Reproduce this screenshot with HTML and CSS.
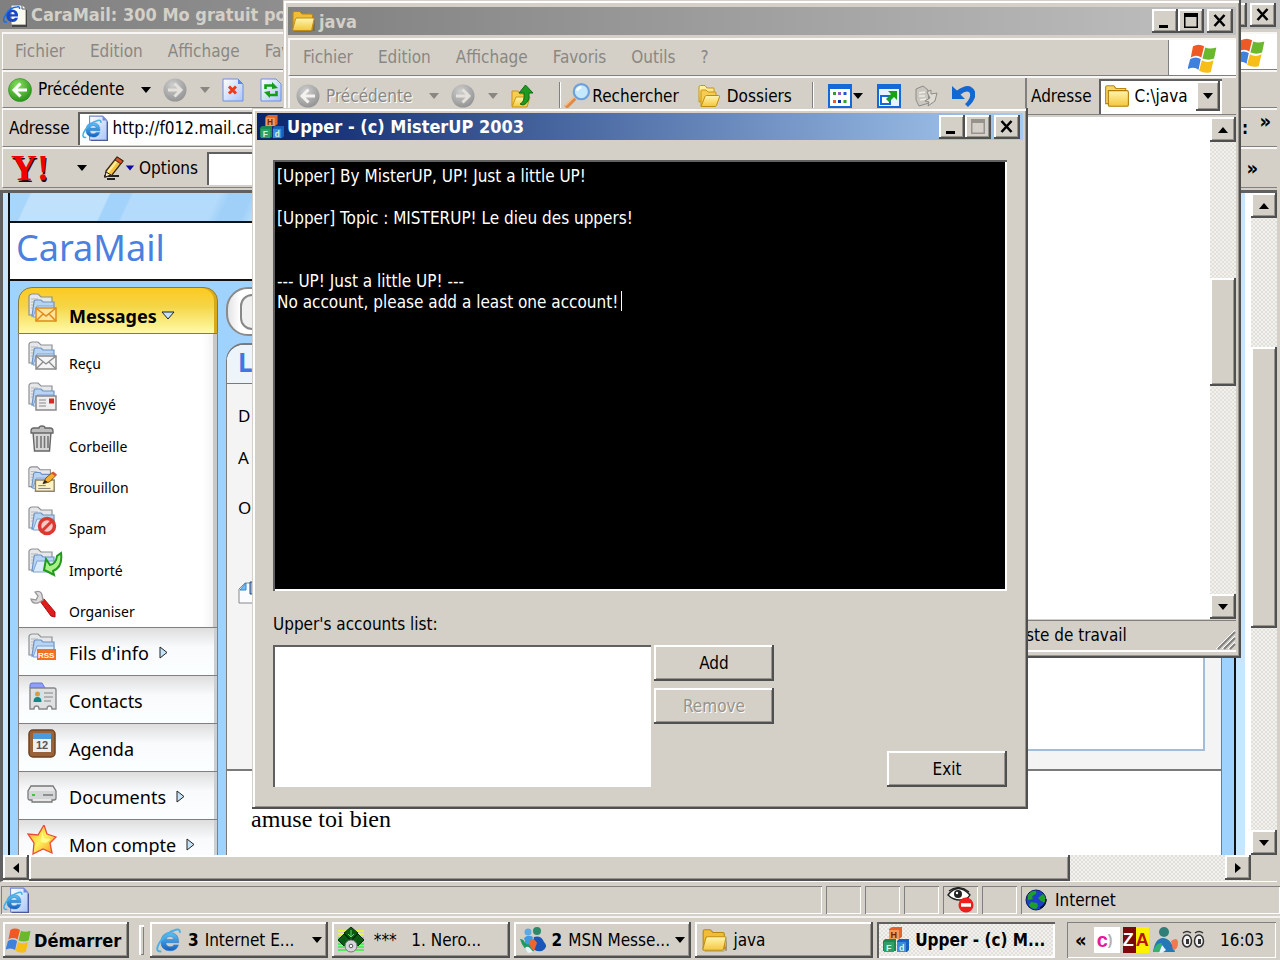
FILE: index.html
```html
<!DOCTYPE html>
<html lang="fr">
<head>
<meta charset="utf-8">
<title>Upper - (c) MisterUP 2003</title>
<link rel="stylesheet" href="styles.css">
</head>
<body>
<svg class="defs" aria-hidden="true">
  <defs>
    <linearGradient id="gFolder" x1="0" y1="0" x2="0" y2="1"><stop offset="0" stop-color="#fff6b0"/><stop offset="1" stop-color="#f5c63c"/></linearGradient>
    <linearGradient id="gDoc" x1="0" y1="0" x2="1" y2="1"><stop offset="0" stop-color="#fff"/><stop offset="1" stop-color="#a9c6f7"/></linearGradient>
    <radialGradient id="gGreen" cx=".4" cy=".3" r=".8"><stop offset="0" stop-color="#8ce05e"/><stop offset="1" stop-color="#1c8a12"/></radialGradient>
    <radialGradient id="gGray" cx=".4" cy=".3" r=".8"><stop offset="0" stop-color="#cfcfcf"/><stop offset="1" stop-color="#8c8c8c"/></radialGradient>
    <linearGradient id="gBlue" x1="0" y1="0" x2="0" y2="1"><stop offset="0" stop-color="#5ec4f5"/><stop offset="1" stop-color="#1460c0"/></linearGradient>
    <linearGradient id="gStar" x1="0" y1="0" x2="1" y2="1"><stop offset="0" stop-color="#f9a01b"/><stop offset=".5" stop-color="#fff25a"/><stop offset="1" stop-color="#f58a1e"/></linearGradient>
  </defs>
  <symbol id="e" viewBox="0 0 24 24">
    <path fill-rule="evenodd" d="M21 14.500H9q.6 3.700 4.200 3.700 2.300 0 3.300-1.700h4.200Q18.800 22 13 22q-8.500-.4-8.500-8.500Q5 5.500 13 5q8.200.5 8 9.500zM9.200 11.500h7.400Q16 8.600 13 8.600t-3.800 2.900z" fill="url(#gBlue)" stroke="#2a78c8" stroke-width=".5"/>
    <path d="M5 22.500Q-2 23 3.500 14T18.500 2.500q4-1 3.500 3" fill="none" stroke="#4ab0e6" stroke-width="1.800"/>
  </symbol>
  <symbol id="iedoc" viewBox="0 0 24 24">
    <path d="M7 1h12l4 4v18H7z" fill="url(#gDoc)" stroke="#7189d2" stroke-width="1"/><path d="M8 23.500h15.500V6" fill="none" stroke="#4a5a9a"/>
    <path d="M19 1v4h4z" fill="#6f8be0"/>
    <use href="#e" x="0" y="3" width="19" height="19"/>
  </symbol>
  <symbol id="iedark" viewBox="0 0 24 24">
    <path d="M8 2h11l4 4v16H8z" fill="#fbfaf0" stroke="#777"/><path d="M9 23h15V7" fill="none" stroke="#333" stroke-width="1.500"/><path d="M19 2v4h4" fill="#fff" stroke="#555"/>
    <path fill-rule="evenodd" d="M15 13.500H6.500q.6 2.500 3.200 2.500 1.600 0 2.300-1.200h3Q13.800 19 9.500 19 3.500 18.500 3.300 12.800 3.700 7 9.500 6.500q5.800.5 5.500 7zM6.600 11.200h5.200Q11.500 9 9.300 9T6.600 11.200z" fill="#1848c8"/><path d="M4 19Q-2 20 2.500 12T14 4q3-1 2.500 2" fill="none" stroke="#1b6fe0" stroke-width="1.500"/>
  </symbol>
  <symbol id="folder" viewBox="0 0 24 22">
    <path d="M3 21.500h18.500L24 9v12H4z" fill="#6a5a30" opacity=".5"/>
    <path d="M2 19V3q0-1.500 1.500-1.500h5L11 4h9q1.500 0 1.500 1.500V19z" fill="#f0bd35" stroke="#b9860d"/>
    <path d="M3 20.500q-1.500 0-1.200-1.500L4.500 9q.3-1 1.500-1h16q1.300 0 1 1.300L20.800 19.500q-.3 1-1.500 1z" fill="url(#gFolder)" stroke="#c08d12"/>
  </symbol>
  <symbol id="closedfolder" viewBox="0 0 24 22">
    <path d="M1.500 18V3q0-1.500 1.500-1.500h6L11 4h9v14z" fill="#f6d566" stroke="#b9860d"/>
    <path d="M4 6h17q1.500 0 1.500 1.500V19q0 1.500-1.500 1.500H5.500Q4 20.500 4 19z" fill="url(#gFolder)" stroke="#b07c08"/>
  </symbol>
  <symbol id="folders" viewBox="0 0 24 24">
    <path d="M2 18V3q0-1.500 1.500-1.500H8L10 4h7v12z" fill="url(#gFolder)" stroke="#c99614"/>
    <path d="M4 22V7q0-1 1-1h4l2 2h7q1 0 1 1v4" fill="#f4cd52" stroke="#c99614"/>
    <path d="M4 22.500l4-10q.4-1 1.500-1h12q1.500 0 1 1.300l-3 8.700q-.4 1-1.500 1z" fill="url(#gFolder)" stroke="#c08d12"/>
  </symbol>
  <symbol id="back" viewBox="0 0 24 24"><circle cx="12" cy="12" r="11.500" fill="url(#gGreen)" stroke="#2d8a22" stroke-width=".6"/><path d="M12.500 5.500L6 12l6.500 6.500M6.500 12H19" fill="none" stroke="#fff" stroke-width="3"/></symbol>
  <symbol id="backoff" viewBox="0 0 24 24"><circle cx="12" cy="12" r="11.500" fill="url(#gGray)"/><path d="M12.500 5.500L6 12l6.500 6.500M6.500 12H19" fill="none" stroke="#f4f2ee" stroke-width="3"/></symbol>
  <symbol id="fwdoff" viewBox="0 0 24 24"><circle cx="12" cy="12" r="11.500" fill="url(#gGray)"/><path d="M11.500 5.500L18 12l-6.500 6.500M17.500 12H5" fill="none" stroke="#e4e1dc" stroke-width="3"/></symbol>
  <symbol id="stop" viewBox="0 0 22 24"><path d="M1 1h15l5 5v17H1z" fill="url(#gDoc)" stroke="#6f8fdc"/><path d="M16 1v5h5z" fill="#5f86e0"/><path d="M7 8.500l7 7m0-7l-7 7" stroke="#f03c14" stroke-width="3"/></symbol>
  <symbol id="refresh" viewBox="0 0 22 24"><path d="M1 1h15l5 5v17H1z" fill="url(#gDoc)" stroke="#6f8fdc"/><path d="M5.500 11V7.500h8" fill="none" stroke="#12a012" stroke-width="2.600"/><path d="M12 4l6 6-6 1zM10 13l-6 1 6 6z" fill="#12a012"/><path d="M16.500 13v4h-8" fill="none" stroke="#12a012" stroke-width="2.600"/></symbol>
  <symbol id="pencil" viewBox="0 0 24 24"><path d="M2 20h15m-12 3h8" stroke="#222" stroke-width="2"/><path d="M4 15L15 1l6 4-11 14-7 2z" fill="#f9c23c" stroke="#3a2b10" stroke-width="1.300"/><path d="M6 16L16.500 3" stroke="#fff0a0" stroke-width="2"/><path d="M15 1l6 4-2 3-6-4z" fill="#e14a2a" stroke="#3a2b10"/><path d="M3 21l1-5 5 3z" fill="#fbe8c4" stroke="#222"/></symbol>
  <symbol id="up" viewBox="0 0 22 24"><path d="M1 22V7h6l2 3h7v12z" fill="#f4cd52" stroke="#c99614"/><path d="M1 23l4-10h14l-3 10z" fill="url(#gFolder)" stroke="#c99614"/><path d="M9 20q5-2 4-11H8l6.500-8L22 9h-4q1 10-6 12z" fill="#1f9a20" stroke="#0f6f12"/></symbol>
  <symbol id="search" viewBox="0 0 24 24"><path d="M1.500 22.500L10 14" stroke="#e08a4a" stroke-width="4"/><path d="M1 21l8-8" stroke="#f7c490" stroke-width="1.500"/><circle cx="16" cy="8" r="7" fill="#c5e8fd" stroke="#6f9fdc" stroke-width="2"/><path d="M12 7q1-3 4-3" fill="none" stroke="#fff" stroke-width="2"/></symbol>
  <symbol id="views" viewBox="0 0 24 24"><path d="M1 1h22v22H1z" fill="#fff" stroke="#1568d8" stroke-width="2"/><path d="M0 0h24v5H0z" fill="#1568d8"/><path d="M5 8h3v3H5zM15.500 16h3v3h-3z" fill="#2d9e2a"/><path d="M10 8h3v3h-3z" fill="#8a5ad0"/><path d="M15.500 8h3v3h-3z" fill="#1a58d0"/><path d="M5 16h3v3H5z" fill="#f05a1a"/><path d="M10 16h3v3h-3z" fill="#142fa0"/></symbol>
  <symbol id="goto" viewBox="0 0 24 24"><path d="M1 1h22v22H1z" fill="#e9f3ff" stroke="#1568d8" stroke-width="2"/><path d="M0 0h24v5H0z" fill="#1568d8"/><path d="M4 12h9v8H4z" fill="#fff" stroke="#1568d8" stroke-width="2"/><path d="M11 7h9v9l-3-3-5 5-3-3 5-5z" fill="#18a018"/></symbol>
  <symbol id="copyoff" viewBox="0 0 24 24"><path d="M2 5l7-3 5 4 1 13-10 3-3-6z" fill="#cac7c1" stroke="#8e8b86"/><path d="M5 9l6-1m-6 4h6m-5 4l6-1" stroke="#efece6" stroke-width="1.500"/><path d="M13 8l4-2v4l6-1-2 8-7 5 1-4-4-1 5-3z" fill="#dedbd5" stroke="#8e8b86"/></symbol>
  <symbol id="undo" viewBox="0 0 24 24"><path d="M1 2v13h13l-4.500-4.500q6-5 9-2 2.500 5-4.500 11.500l3 3q9-8 7-15.500Q19-3 6 6.500z" fill="#1268d2"/></symbol>
  <symbol id="flag" viewBox="3 1 26 27">
    <path d="M7 4q5-3 10 0l-2.500 10q-4.500-3-9.500 0z" fill="#ee5a24"/><path d="M18 5q4 2 10 0l-2 10q-5 2-10.500 0z" fill="#6ab82c"/><path d="M4.500 15.500q5-3 9.500 0L12 25q-4-3-10-.5z" fill="#3f80dc"/><path d="M15 16.500q5 3 10.500 0L23 27q-5 2-10.500-1z" fill="#f7bd18"/>
  </symbol>
  <symbol id="blocks" viewBox="0 0 26 26">
    <path d="M6 2l3-2h10v10l-3 2H6z" fill="#e4632c"/><path d="M6 3h10v9H6z" fill="#f49a58"/>
    <path d="M0 14l2-2h11v12H0z" fill="#1c8a50"/><path d="M1 15h10v10H1z" fill="#2fa068"/>
    <path d="M14 14l2-2h10v11l-2 2H14z" fill="#1660c0"/><path d="M14 15h9v10h-9z" fill="#3a8ce0"/>
    <text x="7.500" y="11" class="block-letter">H</text><text x="3" y="24" class="block-letter light">F</text><text x="16" y="24" class="block-letter light">d</text>
  </symbol>
  <symbol id="mailfolder" viewBox="0 0 30 30">
    <path d="M2 22V3q1-2 3-2h6l3 3h11v18z" fill="#e6e7e8" stroke="#8e9093" stroke-width="1.200"/><path d="M4 9h6M4 12h5M4 15h4M4 6h7" stroke="#b4b6b8"/>
    <path d="M5 23l2-14q0-2 2-2h5l2 2h11v13z" fill="#b7d4f3" stroke="#6d93c4" stroke-width="1.200"/><path d="M6 24l4-11h17l-1 11z" fill="#dcebfb" stroke="#7fa2cf"/>
  </symbol>
  <symbol id="m-messages" viewBox="0 0 30 30"><use href="#mailfolder" width="30" height="30"/><path d="M9 15h20v13H9z" fill="#ffe49a" stroke="#e08a1a" stroke-width="1.500"/><path d="M9 15l10 8 10-8M9 28l7-7m13 7l-7-7" fill="none" stroke="#e08a1a" stroke-width="1.500"/></symbol>
  <symbol id="m-recu" viewBox="0 0 30 30"><use href="#mailfolder" width="30" height="30"/><path d="M9 15h20v13H9z" fill="#f5f5f5" stroke="#8a8a8a" stroke-width="1.500"/><path d="M9 15l10 8 10-8M9 28l7-7m13 7l-7-7" fill="none" stroke="#8a8a8a" stroke-width="1.300"/></symbol>
  <symbol id="m-envoye" viewBox="0 0 30 30"><use href="#mailfolder" width="30" height="30"/><path d="M9 14h20v14H9z" fill="#efefef" stroke="#8a8a8a" stroke-width="1.500"/><path d="M12 18h7m-7 3h7m-7 3h7" stroke="#aaa" stroke-width="1.300"/><path d="M22 16.500h5v5h-5z" fill="#d42a2a"/></symbol>
  <symbol id="m-corbeille" viewBox="0 0 30 30"><path d="M6 8h18l-1.500 19h-15z" fill="#d6d6d6" stroke="#666" stroke-width="1.400"/><path d="M4 7q0-3 3-3h5q0-2 3-2t3 2h5q3 0 3 3v2H4z" fill="#bcbcbc" stroke="#666" stroke-width="1.300"/><path d="M10 12v12m4-12v12m3.500-12v12m3.500-12v12" stroke="#777" stroke-width="1.600"/></symbol>
  <symbol id="m-brouillon" viewBox="0 0 32 30"><use href="#mailfolder" width="30" height="30"/><path d="M9 15h20v12H9z" fill="#fdf3c4" stroke="#8f8463" stroke-width="1.500"/><path d="M12 21h8m-8 3h13" stroke="#777"/><path d="M17 19l3-6 7-6 4 3-7 7z" fill="#f7ae2c" stroke="#7a4a10"/><path d="M26 8l2-2 4 3-2 2z" fill="#e0533a"/><path d="M17 19l2-4 3 2z" fill="#222"/></symbol>
  <symbol id="m-spam" viewBox="0 0 30 30"><use href="#mailfolder" width="30" height="30"/><circle cx="20" cy="20" r="7.500" fill="#f5c9c4" stroke="#dc3a30" stroke-width="3.500"/><path d="M15 25l10-10" stroke="#dc3a30" stroke-width="3"/></symbol>
  <symbol id="m-importe" viewBox="0 0 36 30"><use href="#mailfolder" width="30" height="30"/><path d="M19 11l4 6q6-1 7-9l4-3q2 14-8 18l1 4q-7-4-10-5z" fill="#a9f08a" stroke="#1f9a1a" stroke-width="2"/></symbol>
  <symbol id="m-organiser" viewBox="0 0 30 30"><path d="M13 12l4-2 11 13v5l-4-1z" fill="#e01c1c" stroke="#a80e0e"/><path d="M8 3q6-2 7 3l1 5-5 3Q5 15 4 10l5 1 2-4z" fill="#ddd" stroke="#999" stroke-width="1.300"/></symbol>
  <symbol id="m-rss" viewBox="0 0 30 30"><use href="#mailfolder" width="30" height="30"/><path d="M10 16h19v11H10z" fill="#f2701e"/><text x="11" y="25" class="rss-letter">RSS</text></symbol>
  <symbol id="m-contacts" viewBox="0 0 30 30"><path d="M3 4q0-2 2-2h10l3 5H3z" fill="#8ea0f8" stroke="#6576d8"/><path d="M3 7h24q2 0 2 2v19h-4q0-3-2.500-3T20 28h-8q0-3-2.500-3T7 28H3z" fill="#dfe0e2" stroke="#888" stroke-width="1.400"/><path d="M6 10h9v11H6z" fill="#c5e6ef"/><circle cx="10.500" cy="13" r="2.500" fill="#d99a4a"/><path d="M6.500 21q0-5 4-5t4 5z" fill="#17848a"/><path d="M17 12h9m-9 4h9m-9 4h7" stroke="#a2a2a2" stroke-width="1.500"/></symbol>
  <symbol id="m-agenda" viewBox="0 0 30 30"><rect x="2" y="1" width="26" height="27" rx="4" fill="#9a6238" stroke="#6e4220" stroke-width="1.500"/><path d="M6 5h18v18H6z" fill="#eef0f2"/><path d="M6 4h18v6H6z" fill="#4b9ade"/><text x="9" y="20" class="day">12</text></symbol>
  <symbol id="m-drive" viewBox="0 0 30 30"><path d="M4 9h22l3 5v7q0 2-2 2h-2v2H5v-2H3q-2 0-2-2v-7z" fill="#e8e8e8" stroke="#777" stroke-width="1.300"/><path d="M2 14h26v8H2z" fill="#d4d5d6"/><path d="M16 18h10" stroke="#777" stroke-width="1.500"/><path d="M5 17h3v2H5z" fill="#41c441"/></symbol>
  <symbol id="m-star" viewBox="0 0 30 30"><path d="M17 0l3 9 9 3-6 6 2 10-9-4-10 5 1-11-6-9 10 1z" fill="url(#gStar)" stroke="#ee4a3a" stroke-width="1.300"/><path d="M15 6l2 7 7 1-5 4-5-1z" fill="#fffb8a"/></symbol>
  <symbol id="nero" viewBox="0 0 26 26"><path d="M0 4h26M0 7h26" stroke="#eaff20" stroke-width="1.600"/><path d="M0 11h26M0 14h26M0 17h26M0 20h26M0 23h26" stroke="#30f040" stroke-width="1.600"/><path d="M13 0l7 6-7 7-7-7zM6 7l6 6-6 6-6-6zM20 7l6 6-6 6-6-6z" fill="#0b5a14" stroke="#052f08"/><path d="M13 3v7m-3-3l3 3 3-3" stroke="#5fe05f" fill="none"/><circle cx="13" cy="19" r="6" fill="#d8d4dc" stroke="#777"/><circle cx="13" cy="19" r="1.800" fill="#fff" stroke="#555"/></symbol>
  <symbol id="msn" viewBox="0 0 26 26"><circle cx="8" cy="5" r="3.500" fill="#5fa8e0"/><circle cx="17" cy="4" r="4" fill="#2b8a68"/><path d="M0 12q4 0 5 4 2-6 7-5l2 13q-10 2-14-12z" fill="#1e9a60"/><path d="M4 11q4-4 9-1l-2 8-5-1z" fill="#3f9ae0"/><path d="M14 10q7-2 10 5 5 5-2 9-8 1-10-4z" fill="#1c55b8"/><path d="M9 15q4-6 8 1l-3 8q-4-3-5-9z" fill="#f0662a"/><path d="M5 21q3-4 8 4l-5 1z" fill="#e8f2fa"/></symbol>
  <symbol id="globe" viewBox="0 0 22 22"><circle cx="11" cy="11" r="10" fill="#1b3fc8" stroke="#0a1d5a"/><path d="M3 6q4-5 8-4 1 3-2 4t-1 4l-5 1zM13 9l5-4q4 4 2 9l-4-2zM6 13l6 1q2 3-1 6-5 0-7-4z" fill="#1ea028"/><path d="M15 19q6-3 6-9" stroke="#061030" fill="none" stroke-width="1.500"/></symbol>
  <symbol id="eye" viewBox="0 0 28 26"><path d="M1 8q10-13 22 0-3 5-10 5T1 8z" fill="#fff" stroke="#222" stroke-width="1.400"/><path d="M2 4q10-7 20 1" fill="none" stroke="#222" stroke-width="1.500"/><circle cx="11" cy="7" r="4" fill="#222"/><circle cx="10" cy="6" r="1.200" fill="#fff"/><circle cx="19" cy="18" r="7.500" fill="#ee1c1c"/><path d="M14 18h10" stroke="#fff" stroke-width="3.500"/></symbol>
  <symbol id="buddy" viewBox="0 0 26 26"><circle cx="12" cy="5" r="5" fill="#2f7f78"/><path d="M1 25q2-14 10-14t12 14z" fill="#2478b8"/><path d="M1 25q2-9 9-9l-2 9z" fill="#38b070"/><path d="M10 18l4 5-4 3H7z" fill="#e4f2fa"/><path d="M19 14q7-5 7 2t-5 7z" fill="#f07a50"/></symbol>
  <symbol id="eyes" viewBox="0 0 24 20"><path d="M2 3q4-3 8 0m4 0q4-3 8 0" fill="none" stroke="#333" stroke-width="1.500"/><ellipse cx="6" cy="11" rx="4.500" ry="6" fill="#f2f2f2" stroke="#333" stroke-width="1.500"/><ellipse cx="18" cy="11" rx="4.500" ry="6" fill="#f2f2f2" stroke="#333" stroke-width="1.500"/><path d="M5 9h3v5H5zM17 9h3v5h-3z" fill="#333"/></symbol>
  <symbol id="minimize" viewBox="0 0 24 24"><path d="M6 16h9v3H6z"/></symbol>
  <symbol id="maximize" viewBox="0 0 24 24"><path d="M5 4h14v15H5zM6.500 8v9.500h11V8z" fill-rule="evenodd"/></symbol>
  <symbol id="close" viewBox="0 0 24 24"><path d="M6.500 6l10 11m0-11l-10 11" fill="none" stroke="currentColor" stroke-width="2.600"/></symbol>
  <symbol id="tri-d" viewBox="0 0 12 8"><path d="M1 1h10L6 7z"/></symbol>
  <symbol id="tri-u" viewBox="0 0 12 8"><path d="M1 7h10L6 1z"/></symbol>
  <symbol id="tri-l" viewBox="0 0 8 12"><path d="M7 1v10L1 6z"/></symbol>
  <symbol id="tri-r" viewBox="0 0 8 12"><path d="M1 1v10l6-5z"/></symbol>
  <symbol id="more-r" viewBox="0 0 9 13"><path d="M1 1v11l7-5.500z" fill="#c4e2f8" stroke="#222"/></symbol>
  <symbol id="more-d" viewBox="0 0 14 9"><path d="M1 1h12L7 8z" fill="#c4e2f8" stroke="#222"/></symbol>
</svg>

<div class="desktop">
  <main class="browser">
    <header class="titlebar inactive">
      <svg class="i24"><use href="#iedark"/></svg>
      <span class="title">CaraMail: 300 Mo gratuit pour vos e-mails</span>
      <span class="winbtns">
        <button aria-label="Réduire"><svg class="i24"><use href="#minimize"/></svg></button><button aria-label="Restaurer"><svg class="i24"><use href="#maximize"/></svg></button><button class="close" aria-label="Fermer"><svg class="i24"><use href="#close"/></svg></button>
      </span>
    </header>
    <nav class="bar menubar">
      <button>Fichier</button><button>Edition</button><button>Affichage</button><button>Favoris</button>
      <span class="brand"><svg class="i30"><use href="#flag"/></svg></span>
    </nav>
    <div class="bar toolbar">
      <button class="tool"><svg class="i24"><use href="#back"/></svg>Précédente</button>
      <button class="drop" aria-label="Historique"><svg class="tri"><use href="#tri-d"/></svg></button>
      <button class="tool off" aria-label="Suivante"><svg class="i24"><use href="#fwdoff"/></svg></button>
      <button class="drop off" aria-label="Historique suivant"><svg class="tri"><use href="#tri-d"/></svg></button>
      <button class="tool stop" aria-label="Arrêter"><svg class="i24"><use href="#stop"/></svg></button>
      <button class="tool reload" aria-label="Actualiser"><svg class="i24"><use href="#refresh"/></svg></button>
    </div>
    <div class="bar addressbar">
      <label for="url">Adresse</label>
      <span class="field"><svg class="i26"><use href="#iedoc"/></svg><input id="url" value="http://f012.mail.caramail.com/"></span>
      <button class="chevron">: <span>»</span></button>
    </div>
    <div class="bar yahoobar">
      <span class="yahoo">Y!</span>
      <button class="drop" aria-label="Menu Yahoo"><svg class="tri"><use href="#tri-d"/></svg></button>
      <button class="tool options"><svg class="i24"><use href="#pencil"/></svg><svg class="tri navy"><use href="#tri-d"/></svg>Options</button>
      <span class="field"><input aria-label="Recherche"></span>
      <button class="chevron low">»</button>
    </div>

    <div class="viewport">
      <div class="page">
        <div class="sheet">
          <div class="banner"></div>
          <div class="logo">CaraMail</div>
          <div class="columns">
            <nav class="side">
              <a class="head" href="#"><svg class="i30"><use href="#m-messages"/></svg><span>Messages</span><svg class="more-d"><use href="#more-d"/></svg></a>
              <div class="items">
                <a href="#"><svg class="i30"><use href="#m-recu"/></svg><span>Reçu</span></a>
                <a href="#"><svg class="i30"><use href="#m-envoye"/></svg><span>Envoyé</span></a>
                <a href="#"><svg class="i30"><use href="#m-corbeille"/></svg><span>Corbeille</span></a>
                <a href="#"><svg class="i30"><use href="#m-brouillon"/></svg><span>Brouillon</span></a>
                <a href="#"><svg class="i30"><use href="#m-spam"/></svg><span>Spam</span></a>
                <a href="#"><svg class="i36"><use href="#m-importe"/></svg><span>Importé</span></a>
                <a href="#"><svg class="i30"><use href="#m-organiser"/></svg><span>Organiser</span></a>
              </div>
              <a class="section" href="#"><svg class="i30"><use href="#m-rss"/></svg><span>Fils d'info</span><svg class="more-r"><use href="#more-r"/></svg></a>
              <a class="section" href="#"><svg class="i30"><use href="#m-contacts"/></svg><span>Contacts</span></a>
              <a class="section" href="#"><svg class="i30"><use href="#m-agenda"/></svg><span>Agenda</span></a>
              <a class="section" href="#"><svg class="i30"><use href="#m-drive"/></svg><span>Documents</span><svg class="more-r"><use href="#more-r"/></svg></a>
              <a class="section" href="#"><svg class="i30"><use href="#m-star"/></svg><span>Mon compte</span><svg class="more-r"><use href="#more-r"/></svg></a>
            </nav>
            <section class="mail">
              <div class="pill"><span></span></div>
              <div class="letter">
                <h2>L</h2>
                <div class="fields">
                  <p>D</p><p>A</p><p class="subject">O</p>
                  <svg class="attach" viewBox="0 0 24 24"><path d="M1 8l6-6h16v20H1z" fill="#fafcff" stroke="#888"/><path d="M2 9l6-7v7z" fill="#6fc0f8" stroke="#3a86c8"/><path d="M12 1h11v12H12z" fill="#8ab4e0" stroke="#2a4a80"/></svg>
                  <div class="notes"></div>
                </div>
                <p class="body">amuse toi bien</p>
              </div>
            </section>
          </div>
        </div>
      </div>
      <div class="scroll v">
        <button aria-label="Haut"><svg class="tri"><use href="#tri-u"/></svg></button>
        <div class="track"><div class="thumb page-v"></div></div>
        <button aria-label="Bas"><svg class="tri"><use href="#tri-d"/></svg></button>
      </div>
      <div class="scroll h">
        <button aria-label="Gauche"><svg class="trih"><use href="#tri-l"/></svg></button>
        <div class="track"><div class="thumb page-h"></div></div>
        <button aria-label="Droite"><svg class="trih"><use href="#tri-r"/></svg></button>
      </div>
    </div>

    <footer class="status">
      <span class="cell main"><svg class="i26"><use href="#iedoc"/></svg></span>
      <span class="cell"></span><span class="cell"></span><span class="cell"></span>
      <span class="cell"><svg class="i28"><use href="#eye"/></svg></span>
      <span class="cell"></span>
      <span class="cell zone"><svg class="i22"><use href="#globe"/></svg>Internet</span>
    </footer>
  </main>

  <section class="window explorer">
    <header class="titlebar inactive">
      <svg class="i24"><use href="#folder"/></svg><span class="title">java</span>
      <span class="winbtns">
        <button aria-label="Réduire"><svg class="i24"><use href="#minimize"/></svg></button><button aria-label="Agrandir"><svg class="i24"><use href="#maximize"/></svg></button><button class="close" aria-label="Fermer"><svg class="i24"><use href="#close"/></svg></button>
      </span>
    </header>
    <nav class="bar menubar">
      <button>Fichier</button><button>Edition</button><button>Affichage</button><button>Favoris</button><button>Outils</button><button>?</button>
      <span class="brand"><svg class="i30"><use href="#flag"/></svg></span>
    </nav>
    <div class="bar toolbar">
      <button class="tool off"><svg class="i24"><use href="#backoff"/></svg>Précédente</button>
      <button class="drop off" aria-label="Historique"><svg class="tri"><use href="#tri-d"/></svg></button>
      <button class="tool off" aria-label="Suivante"><svg class="i24"><use href="#fwdoff"/></svg></button>
      <button class="drop off" aria-label="Historique suivant"><svg class="tri"><use href="#tri-d"/></svg></button>
      <button class="tool parent" aria-label="Dossier parent"><svg class="i24"><use href="#up"/></svg></button>
      <span class="sep"></span>
      <button class="tool find"><svg class="i26"><use href="#search"/></svg>Rechercher</button>
      <button class="tool dirs"><svg class="i24"><use href="#folders"/></svg>Dossiers</button>
      <span class="sep"></span>
      <button class="tool views" aria-label="Affichages"><svg class="i24"><use href="#views"/></svg><svg class="tri"><use href="#tri-d"/></svg></button>
      <button class="tool" aria-label="Déplacer vers"><svg class="i24"><use href="#goto"/></svg></button>
      <button class="tool" aria-label="Copier vers"><svg class="i24"><use href="#copyoff"/></svg></button>
      <button class="tool" aria-label="Annuler"><svg class="i24"><use href="#undo"/></svg></button>
      <span class="address">
        <label for="path">Adresse</label>
        <span class="field"><svg class="i26"><use href="#closedfolder"/></svg><input id="path" value="C:\java"><button aria-label="Ouvrir la liste"><svg class="tri"><use href="#tri-d"/></svg></button></span>
      </span>
    </div>
    <div class="files">
      <div class="scroll v">
        <button aria-label="Haut"><svg class="tri"><use href="#tri-u"/></svg></button>
        <div class="track"><div class="thumb files-v"></div></div>
        <button aria-label="Bas"><svg class="tri"><use href="#tri-d"/></svg></button>
      </div>
    </div>
    <footer class="fileinfo"><span>Poste de travail</span><svg class="grip" viewBox="0 0 20 20"><path d="M2 19L19 2M8 19L19 8M14 19l5-5" stroke="#808080" stroke-width="2"/><path d="M0 19L19 0M6 19L19 6M12 19l7-7" stroke="#fff"/></svg></footer>
  </section>

  <section class="window upper">
    <header class="titlebar active">
      <svg class="i24"><use href="#blocks"/></svg><span class="title">Upper - (c) MisterUP 2003</span>
      <span class="winbtns">
        <button aria-label="Minimize"><svg class="i24"><use href="#minimize"/></svg></button><button aria-label="Maximize" disabled><svg class="i24"><use href="#maximize"/></svg></button><button class="close" aria-label="Close"><svg class="i24"><use href="#close"/></svg></button>
      </span>
    </header>
    <form class="dialog">
      <div class="console">
        <textarea aria-label="Console" readonly spellcheck="false">[Upper] By MisterUP, UP! Just a little UP!

[Upper] Topic : MISTERUP! Le dieu des uppers!


--- UP! Just a little UP! ---
No account, please add a least one account!</textarea>
        <i class="caret"></i>
      </div>
      <label for="accounts">Upper's accounts list:</label>
      <div class="accounts">
        <select id="accounts" size="6"></select>
        <div class="actions">
          <button type="button">Add</button>
          <button type="button" disabled>Remove</button>
        </div>
        <button type="button" class="exit">Exit</button>
      </div>
    </form>
  </section>

  <nav class="taskbar">
    <button class="start"><svg class="i26"><use href="#flag"/></svg>Démarrer</button>
    <span class="handle"></span>
    <div class="tasks">
      <button><svg class="i26"><use href="#e"/></svg><b>3</b><span>Internet E...</span><svg class="tri"><use href="#tri-d"/></svg></button>
      <button><svg class="i26"><use href="#nero"/></svg><span class="nero">***&nbsp;&nbsp; 1. Nero...</span></button>
      <button><svg class="i26"><use href="#msn"/></svg><b>2</b><span>MSN Messe...</span><svg class="tri"><use href="#tri-d"/></svg></button>
      <button><svg class="i26"><use href="#folder"/></svg><span class="wide">java</span></button>
      <button class="pressed"><svg class="i26"><use href="#blocks"/></svg><b>Upper - (c) M...</b></button>
    </div>
    <div class="tray">
      <button class="expand" aria-label="Afficher les icônes">«</button>
      <span class="badge caramail">c<i>)</i></span>
      <span class="badge za"><b>Z</b><i>A</i></span>
      <svg class="i26"><use href="#buddy"/></svg>
      <svg class="i24"><use href="#eyes"/></svg>
      <time>16:03</time>
    </div>
  </nav>
</div>
</body>
</html>
```
FILE: styles.css
```css
* { box-sizing: border-box; }

:root {
  --face: #d4d0c8;
  --shade: #808080;
  --raised: inset -2px -2px #505050, inset 2px 2px #fff, inset -3px -3px #96938d;
  --sunken: inset 2px 2px #606060, inset -2px -2px #fff;
}

body {
  margin: 0;
  font: 17px/21px "DejaVu Sans Condensed", "Noto Sans", sans-serif;
  color: #000;
  background: var(--face);
}

button, input, textarea, select {
  font: inherit;
  color: inherit;
  margin: 0;
  padding: 0;
  border: 0;
  border-radius: 0;
  background: none;
  outline: 0;
}

p, h2 { margin: 0; }
a { color: inherit; text-decoration: none; }
svg { flex: none; fill: currentColor; }
.defs { position: absolute; width: 0; height: 0; }
.i22 { width: 22px; height: 22px; }
.i24 { width: 24px; height: 24px; }
.i26 { width: 26px; height: 26px; }
.i28 { width: 28px; height: 26px; }
.i30 { width: 30px; height: 30px; }
.i36 { width: 36px; height: 30px; }
.tri { width: 12px; height: 8px; }
.trih { width: 8px; height: 12px; }
.more-d { width: 14px; height: 9px; }
.more-r { width: 9px; height: 13px; }
.block-letter { font: bold 9px "Liberation Sans", sans-serif; fill: #7a2208; }
.block-letter.light { fill: #d8f4e0; }
.rss-letter { font: bold 8px "Liberation Sans", sans-serif; fill: #fff; }
.day { font: bold 11px "Liberation Sans", sans-serif; fill: #555; }

.desktop {
  position: relative;
  display: flex;
  flex-direction: column;
  height: 100vh;
  overflow: hidden;
}

/* title bars */
.titlebar {
  display: flex;
  align-items: center;
  gap: 4px;
  height: 28px;
  padding: 0 3px;
  font-size: 18px;
  font-weight: bold;
  white-space: nowrap;
}
.titlebar .title { flex: 1; min-width: 0; }
.inactive { background: linear-gradient(90deg, #808080, #c0c0c0); color: var(--face); }
.active { background: linear-gradient(90deg, #0a246a, #a6caf0); color: #fff; }
.winbtns { display: flex; color: #000; }
.winbtns button {
  width: 26px;
  height: 24px;
  background: var(--face);
  box-shadow: var(--raised);
  display: grid;
  place-items: center;
}
.winbtns .close { margin-left: 3px; }
.winbtns button:disabled { color: #96938d; }

/* browser window */
.browser { flex: 1; min-height: 0; display: flex; flex-direction: column; padding-right: 3px; }
.browser > .titlebar { margin-right: -3px; height: 29px; padding-right: 4px; }
.bar {
  display: flex;
  align-items: center;
  margin-left: 2px;
  height: 38px;
  border-top: 2px solid #f8f7f5;
  border-bottom: 1px solid var(--shade);
  border-left: 1px solid #fff;
  white-space: nowrap;
}
.browser > .titlebar + .bar { margin-top: 3px; }
.menubar { color: #8a8782; padding-left: 12px; gap: 25px; }
.brand {
  margin-left: auto;
  align-self: stretch;
  display: grid;
  place-items: center;
  background: #fff;
  border-left: 1px solid var(--shade);
}
.browser .brand { width: 54px; }
.tool { display: flex; align-items: center; gap: 6px; }
.tool.off, .drop.off { color: #8a8782; text-shadow: 1px 1px #fff; }
.drop { display: flex; }
.browser .toolbar { padding-left: 5px; }
.browser .toolbar .drop { margin: 0 11px 0 16px; }
.browser .toolbar .off.drop { margin: 0 10px 0 12px; }
.browser .reload { margin-left: 14px; }

.field {
  display: flex;
  align-items: center;
  gap: 5px;
  min-width: 0;
  background: #fff;
  box-shadow: var(--sunken);
  padding: 2px 4px;
}
.field input { flex: 1; min-width: 0; }
.addressbar { padding-left: 6px; gap: 8px; height: 39px; }
.addressbar .field { flex: 1; height: 33px; }
.chevron { padding: 0 6px 0 4px; font-weight: bold; }
.chevron span { margin-left: 6px; position: relative; top: -6px; font-size: 20px; }
.chevron.low { font-size: 20px; padding: 0 19px 0 12px; }
.yahoobar { padding-left: 8px; height: 41px; }
.yahoo { font: bold 36px/34px "Liberation Serif", serif; color: #f00000; text-shadow: 1px 2px #300; width: 54px; }
.yahoobar .drop { margin: 0 14px 0 11px; }
.options { gap: 4px; }
.options .navy { color: #0a0aa0; width: 10px; margin-left: -5px; }
.yahoobar .field { flex: 1; height: 33px; margin-left: 9px; }

/* browser viewport */
.viewport {
  flex: 1;
  min-height: 0;
  display: grid;
  grid-template: minmax(0, 1fr) 26px / minmax(0, 1fr) 26px;
  margin-top: 2px;
  border-top: 3px solid #606060;
  border-left: 3px solid #606060;
  border-bottom: 1px solid #fff;
}
.page { overflow: hidden; background: #fff; padding-right: 6px; }
.sheet {
  height: 100%;
  border: solid #c6e7ff;
  border-width: 0 9px 0 5px;
  display: flex;
  flex-direction: column;
}
.sheet > * { border-left: 2px solid #111; border-right: 2px solid #111; }
.banner {
  height: 28px;
  background: linear-gradient(115deg, #a8d6fb 0 18px, #bfe1fc 20px 90px, #a3d3fa 92px 110px, #b4dbfb 112px 190px, #a0d0f8 200px 220px, #b6dcfb 230px);
}
.logo {
  height: 60px;
  border-top: 2px solid #111;
  border-bottom: 2px solid #111;
  padding-left: 6px;
  font: 36px/50px "Noto Sans", sans-serif;
  color: #4a80e0;
}
.columns {
  flex: 1;
  min-height: 0;
  display: flex;
  gap: 8px;
  padding: 6px 12px 0 8px;
  background: #9fd3fd;
  font-family: "Noto Sans", sans-serif;
}
.side { width: 200px; flex: none; }
.side a { display: flex; padding-left: 8px; align-items: center; gap: 12px; }
.side .i36 { margin-right: -6px; }
.head {
  height: 47px;
  border: 1px solid #8a7a3a;
  border-radius: 14px 14px 0 0;
  background: linear-gradient(#fcca22, #f5d545 40%, #fffba8);
  box-shadow: inset -3px 0 #d9a91c;
  font: bold 18px/24px "Noto Sans", sans-serif;
}
.head .i30 { margin-top: -6px; }
.head span, .head .more-d { margin-top: 10px; }
.side .more-d { margin-left: -8px; }
.items {
  height: 293px;
  padding-top: 3px;
  display: grid;
  grid-auto-rows: 1fr;
  background: #fff;
  border: solid #808080;
  border-width: 0 1px 0 1px;
  box-shadow: inset -4px 0 #c8c8c8, inset -14px 0 12px -8px #ececec;
  font: 14px/18px "Noto Sans", sans-serif;
}
.items .i30, .items .i36 { margin-top: -4px; }
.items span { margin-top: 12px; }
.section {
  height: 48px;
  border: 1px solid #808080;
  border-bottom: 0;
  background: linear-gradient(#dedede, #f8fafb 40%, #fcffff);
  box-shadow: inset -3px 0 #c8d0d4;
  font: 18px/24px "Noto Sans", sans-serif;
}
.section .i30 { margin-top: -8px; }
.section span { margin-top: 3px; }
.section .more-r { margin-left: -2px; margin-top: 2px; }

.mail { flex: 1; min-width: 0; display: flex; flex-direction: column; gap: 7px; }
.pill {
  height: 49px;
  border: 2px solid #8a8a8a;
  border-radius: 22px;
  background: linear-gradient(90deg, #e4e4e4, #fff 12px);
  padding: 5px 12px;
}
.pill span { display: block; width: 36px; height: 36px; border: 2px solid #888; border-radius: 12px; background: #f0f0f0; }
.letter {
  flex: 1;
  border: solid #7a7a7a;
  border-width: 2px 1px 0;
  border-radius: 18px 0 0 0;
  background: #fff;
  overflow: hidden;
}
.letter h2 {
  height: 39px;
  padding-left: 11px;
  background: #edf5fb;
  border-bottom: 1px solid #7a7a7a;
  font: bold 26px/34px "Noto Sans", sans-serif;
  color: #3f78e0;
}
.fields {
  position: relative;
  height: 387px;
  padding: 11px;
  background: #f4f4f4;
  border-bottom: 2px solid #7a7a7a;
}
.fields p { height: 42px; line-height: 42px; }
.fields .subject { margin-top: 8px; }
.attach { width: 24px; height: 24px; margin-top: 52px; }
.notes {
  position: absolute;
  inset: 160px 16px 18px 100px;
  background: #fff;
  border: 2px solid #a4bdd6;
}
.body { padding: 34px 0 0 24px; font: 24px/28px "Liberation Serif", serif; }

/* scroll bars */
.scroll { display: flex; background: repeating-conic-gradient(#f2f1ee 0 25%, #e2e0db 0 50%) 0 0 / 4px 4px; }
.scroll.v { flex-direction: column; width: 26px; }
.scroll.h { height: 26px; }
.scroll > button {
  flex: none;
  width: 26px;
  height: 25px;
  display: grid;
  place-items: center;
  background: var(--face);
  box-shadow: var(--raised);
}
.track { flex: 1; position: relative; }
.thumb { position: absolute; background: var(--face); box-shadow: var(--raised); }
.page-v { inset: 21% 0 33%; }
.page-h { inset: 0 13% 0 0; }
.files-v { inset: 30% 0 46%; }

/* browser status bar */
.status { display: flex; gap: 4px; height: 34px; padding: 4px 0 2px 1px; margin-right: -3px; }
.cell {
  width: 35px;
  display: flex;
  align-items: center;
  gap: 8px;
  box-shadow: inset 1px 1px #808080, inset -1px -1px #fff;
}
.cell.main { flex: 1; padding-left: 2px; }
.cell.zone { width: 259px; padding-left: 4px; }
.cell .i28 { margin-left: 4px; }

/* floating windows */
.window {
  position: absolute;
  background: var(--face);
  box-shadow: inset -2px -2px #505050, inset 1px 1px var(--face), inset 3px 3px #fff, inset -3px -3px #96938d;
}
.explorer { left: 283px; right: 39px; top: 0; padding: 7px 5px 6px; }
.explorer .bar { margin: 0; border-left: 2px solid #f8f7f5; }
.explorer > .titlebar + .bar { margin-top: 3px; }
.explorer .menubar { padding-left: 13px; }
.explorer .brand { width: 68px; }
.explorer .toolbar { height: 39px; padding-left: 6px; position: relative; }
.explorer .toolbar .drop { margin: 0 11px 0 16px; }
.explorer .toolbar .off ~ .off ~ .drop { margin: 0 13px 0 12px; }
.sep { width: 2px; height: 28px; border-left: 1px solid var(--shade); border-right: 1px solid #fff; margin: 0 5px 0 25px; flex: none; }
.parent { margin-left: -2px; }
.find { margin-right: 18px; gap: 2px; margin-left: -2px; }
.explorer .sep ~ .sep { margin: 0 14px 0 20px; }
.views { gap: 0; }
.explorer .views, .views ~ .tool { margin-right: 13px; }
.explorer .address {
  position: absolute;
  right: 0;
  top: 0;
  height: 36px;
  width: 211px;
  padding: 0 14px 0 4px;
  display: flex;
  align-items: center;
  gap: 7px;
  border-left: 2px solid var(--shade);
}
.address .field { flex: 1; height: 35px; gap: 5px; padding: 2px 2px 2px 5px; }
.address .field button { width: 24px; height: 30px; margin-left: -5px; background: var(--face); box-shadow: var(--raised); display: grid; place-items: center; flex: none; }
.files { height: 502px; background: #fff; margin-top: 2px; display: flex; justify-content: flex-end; }
.fileinfo {
  display: flex;
  justify-content: space-between;
  align-items: center;
  height: 32px;
  margin-top: 1px;
  padding-left: 720px;
  border-top: 1px solid var(--shade);
  border-bottom: 2px solid #fff;
}
.grip { width: 20px; height: 20px; align-self: flex-end; }

.upper { left: 252px; top: 108px; width: 776px; padding: 5px; }
.upper .titlebar { gap: 3px; height: 27px; }
.dialog { padding: 20px 16px 17px 16px; }
.console { position: relative; height: 431px; box-shadow: var(--sunken); background: #000; padding: 6px 3px 3px 4px; color: #fff; }
.console textarea { display: block; width: 100%; height: 100%; resize: none; overflow: hidden; }
.caret { position: absolute; left: 348px; top: 131px; width: 1px; height: 20px; background: #fff; }
.dialog label { display: block; margin: 23px 0 10px; }
.accounts { display: flex; gap: 3px; height: 142px; }
.accounts select { width: 378px; height: 142px; background: #fff; box-shadow: var(--sunken); overflow: hidden; }
.actions { display: flex; flex-direction: column; gap: 7px; }
.accounts button { width: 120px; height: 36px; background: var(--face); box-shadow: var(--raised); }
.accounts button:disabled { color: #96938d; text-shadow: 1px 1px #fff; }
.exit { margin-left: auto; align-self: flex-end; }

/* taskbar */
.taskbar {
  display: flex;
  align-items: center;
  gap: 6px;
  height: 44px;
  padding: 3px 4px 1px 3px;
  border-top: 2px solid #f4f3f0;
}
.taskbar button { display: flex; align-items: center; height: 36px; white-space: nowrap; }
.taskbar .start { width: 126px; gap: 2px; padding-left: 3px; box-shadow: var(--raised); font-size: 18px; font-weight: bold; flex: none; }
.handle { width: 5px; height: 30px; margin: 0 0 0 4px; box-shadow: inset 2px 2px #fff, inset -1px -1px var(--shade); }
.tasks { flex: 1; display: flex; gap: 4px; min-width: 0; }
.tasks button { flex: 1 1 0; min-width: 0; gap: 6px; padding: 0 5px 0 6px; box-shadow: var(--raised); overflow: hidden; }
.tasks b + span { flex: 1; text-align: left; }
.tasks .tri { margin-left: -6px; }
.tasks .nero { margin-left: 4px; }
.tasks .pressed { background: repeating-conic-gradient(#f2f1ee 0 25%, #e2e0db 0 50%) 0 0 / 4px 4px; box-shadow: var(--sunken); }
.tray {
  width: 209px;
  height: 36px;
  margin-left: 6px;
  padding: 0 12px 0 8px;
  display: flex;
  align-items: center;
  gap: 3px;
  box-shadow: inset 1px 1px #808080, inset -1px -1px #fff;
}
.taskbar .expand { font-size: 20px; font-weight: bold; margin-right: 4px; }
.badge { width: 26px; height: 26px; display: flex; font: bold 20px/26px "Liberation Sans", sans-serif; }
.badge i { font-style: normal; }
.caramail { background: #fff; color: #e8189a; padding-left: 3px; }
.caramail i { color: #b0b0b0; font-size: 14px; }
.za b { background: #7a0a0a; color: #fff; width: 13px; }
.za i { background: #fff000; color: #c01010; width: 13px; }
.za { font-size: 18px; overflow: hidden; }
.tray time { margin-left: auto; }
```
